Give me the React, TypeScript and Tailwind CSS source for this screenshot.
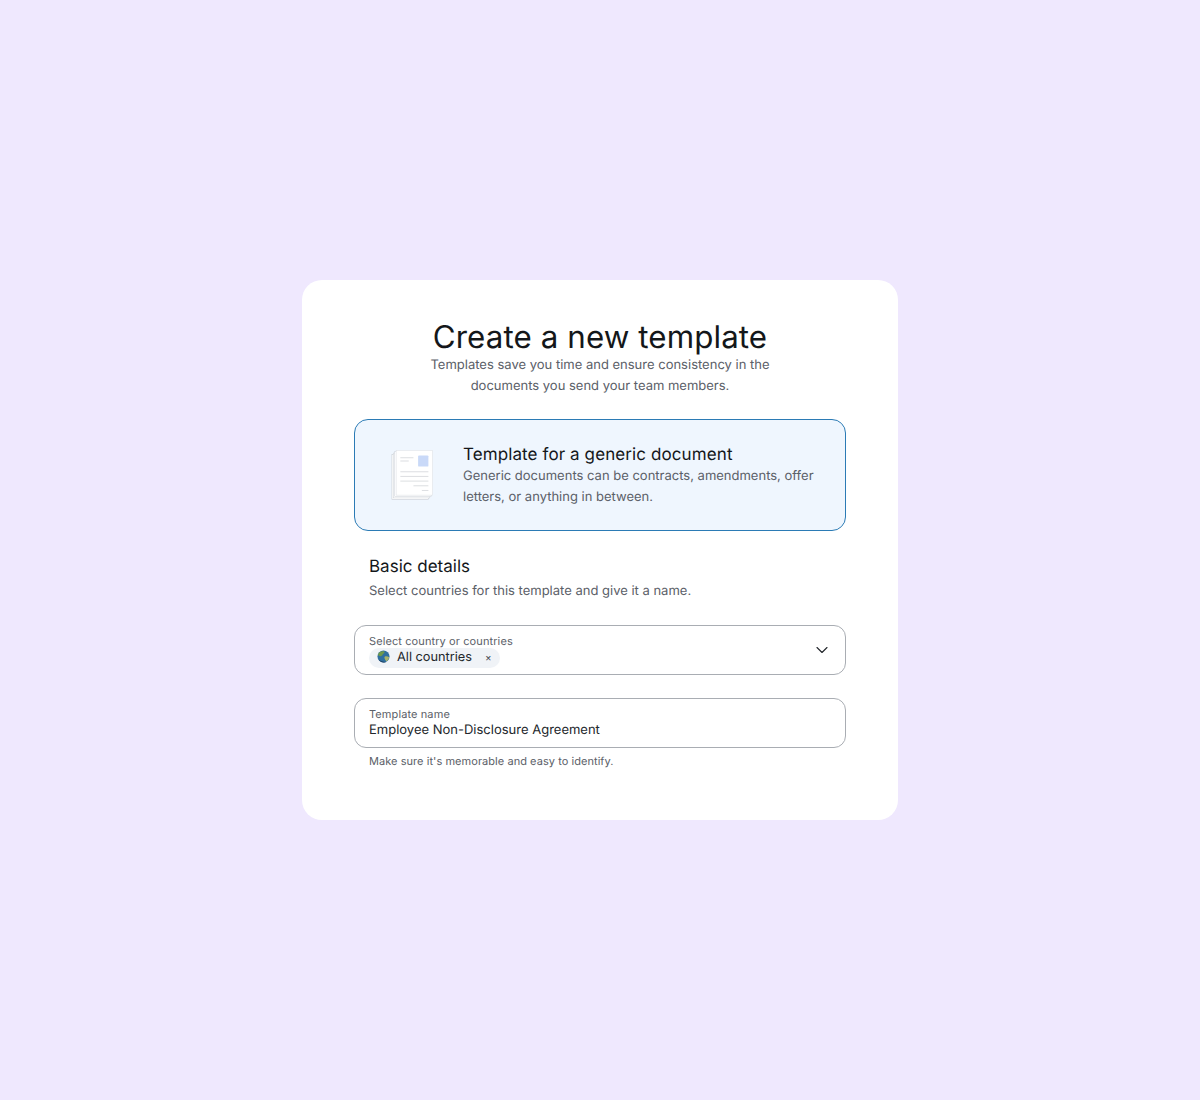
// Create-template card: intro, document type tile, basic details form.

function DocumentIcon() {
  return (
    <svg width="43" height="53" viewBox="0 0 46 56" fill="none" className="shrink-0">
      <rect x="1" y="5.500" width="39" height="48" fill="#fff" stroke="#c6cad1" strokeWidth="0.6" />
      <rect x="2.500" y="4" width="39" height="48" fill="#fff" stroke="#d0d4da" strokeWidth="0.6" />
      <rect x="4" y="2.500" width="39" height="48" fill="#fff" stroke="#d0d4da" strokeWidth="0.6" />
      <rect x="5.500" y="1" width="39" height="48" fill="#fff" stroke="#dde0e5" strokeWidth="0.6" />
      <rect x="29" y="6.500" width="11" height="12" rx="1" fill="#c9d9f8" />
      <g stroke="#c0c4ca" strokeWidth="0.6">
        <path d="M10 9h14M10 12.500h9" />
        <path d="M10 24h30M10 29h30M10 34h30M24 39h16M33 44h7" />
      </g>
    </svg>
  );
}

function Globe() {
  return (
    <svg width="13" height="13" viewBox="0 0 14 14" className="mb-[2px] shrink-0">
      <circle cx="7" cy="7" r="6.500" fill="#2f6f9f" />
      <path d="M3 2.200c1.600-1 3.600-1.200 5-.6.4 1.200-.5 2.200-1.600 2.600-.3 1.300-1.400 2.300-2.600 2.400C2.600 6.800 1.500 6 1 5.200 1.400 4 2.100 3 3 2.200z" fill="#6f9a4a" />
      <path d="M8.500 7c1.500-.4 3.300-.1 4.600.7-.3 2-1.500 3.600-3.200 4.500-.9-.8-1.500-2.100-1.800-3.200-.3-.8-.1-1.500.4-2z" fill="#a9b36a" />
      <path d="M1.500 10c1 2 3 3.500 5.500 3.500 1 0 2-.2 3-.7-2.800.2-6.300-.6-8.500-2.800z" fill="#1d3c5c" />
    </svg>
  );
}

export default function App() {
  return (
    <div className="flex min-h-[1100px] items-center justify-center bg-[#efe8fe] font-['Inter',sans-serif] antialiased [text-rendering:geometricPrecision]">
      <div className="flex h-[540px] w-[596px] flex-col rounded-[20px] bg-white px-[52px] pt-[38px]">
        <h1 className="text-center text-[31.3px] leading-[38px] font-normal tracking-[0.1px] text-[#14171a]">
          Create a new template
        </h1>
        <p className="mt-[-1px] text-center text-[13px] leading-[20.5px] text-[#5b6068]">
          Templates save you time and ensure consistency in the
          <br />
          documents you send your team members.
        </p>

        <div className="mt-[23px] flex h-[112px] items-center rounded-[14px] border border-[#2b7bb5] bg-[#eff6fe] pl-[36px]">
          <DocumentIcon />
          <div className="ml-[29px] pt-[2px]">
            <h2 className="text-[17px] leading-[22px] font-normal tracking-[0.1px] text-[#14171a]">
              Template for a generic document
            </h2>
            <p className="text-[13px] leading-[21px] text-[#5b6068]">
              Generic documents can be contracts, amendments, offer
              <br />
              letters, or anything in between.
            </p>
          </div>
        </div>

        <h2 className="mt-[25px] pl-[15px] text-[17px] leading-[22px] font-normal text-[#14171a]">
          Basic details
        </h2>
        <p className="mt-[3px] pl-[15px] text-[13px] leading-[21px] text-[#5b6068]">
          Select countries for this template and give it a name.
        </p>

        <div className="mt-[23px] flex h-[50px] items-center justify-between rounded-[12px] border border-[#a9adb3] pl-[14px] pr-[17px]">
          <div className="pt-[1px]">
            <div className="text-[11px] leading-[14px] tracking-[0.1px] text-[#5b6068]">
              Select country or countries
            </div>
            <div className="flex h-[20px] w-[131px] items-center rounded-full bg-[#f0f3f7] pl-[8px]">
              <Globe />
              <span className="ml-[7px] text-[12.75px] text-[#23272c]">All countries</span>
              <span className="ml-[13px] text-[10px] leading-none text-[#4a4f57]">×</span>
            </div>
          </div>
          <svg width="12" height="8" viewBox="0 0 12 8" fill="none">
            <path d="M1 1.500 6 6.500l5-5" stroke="#22262b" strokeWidth="1.100" strokeLinecap="round" strokeLinejoin="round" />
          </svg>
        </div>

        <div className="mt-[23px] flex h-[50px] flex-col justify-center rounded-[12px] border border-[#a9adb3] px-[14px]">
          <div className="text-[11px] leading-[14px] tracking-[0.1px] text-[#5b6068]">Template name</div>
          <div className="text-[13px] leading-[19px] text-[#23272c]">
            Employee Non-Disclosure Agreement
          </div>
        </div>
        <p className="mt-[6px] pl-[15px] text-[11px] leading-[14px] tracking-[0.05px] text-[#5b6068]">
          Make sure it's memorable and easy to identify.
        </p>
      </div>
    </div>
  );
}
